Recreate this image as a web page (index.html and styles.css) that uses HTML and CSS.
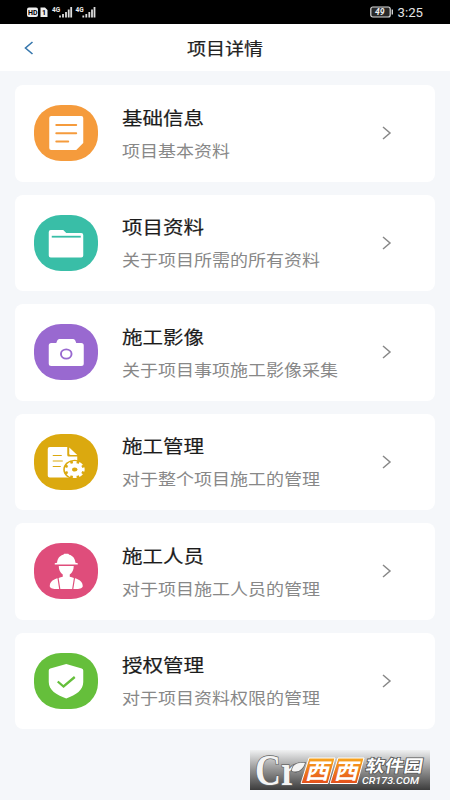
FILE: index.html
```html
<!DOCTYPE html>
<html lang="zh-CN">
<head>
<meta charset="utf-8">
<title>项目详情</title>
<link rel="stylesheet" href="styles.css">
</head>
<body>
<div class="status">
  <svg class="signals" width="70" height="14" viewBox="0 0 70 14">
    <rect x="0" y="2.500" width="11" height="9.500" rx="2" fill="#eee"/>
    <path d="M13.500 2.500h4.500l2.500 2.500V12h-7z" fill="#eee"/>
    <text x="1" y="9.900" class="hd">HD</text>
    <text x="15" y="9.900" class="hd">1</text>
    <text x="25" y="6.500" class="net">4G</text>
    <text x="48.500" y="6.500" class="net">4G</text>
    <path d="M33 12.500V10.500M36 12.500V9M39 12.500V7M41.700 12.500V4.500M44.200 12.500V2M56.300 12.500V10.500M59.300 12.500V9M62.300 12.500V7M65 12.500V4.500M67.500 12.500V2" stroke="#ddd" stroke-width="1.800"/>
  </svg>
  <div class="power">
    <svg width="24" height="12" viewBox="0 0 24 12">
      <rect x=".8" y="1" width="19.400" height="10" rx="2" fill="#292929" stroke="#ddd" stroke-width="1.200"/>
      <path d="M22.300 3.500v5" stroke="#ddd" stroke-width="1.300"/>
      <text x="5" y="9" class="level">49</text>
    </svg>
    <span class="clock">3:25</span>
  </div>
</div>
<header class="nav">
  <svg class="back" width="10" height="14" viewBox="0 0 10 14"><path d="M8.500 1L1.500 7l7 6" fill="none" stroke="#3677ad" stroke-width="1.600"/></svg>
  <h1><span class="wide">项目详情</span></h1>
</header>
<main class="list">
  <section class="card">
    <svg class="icon orange" viewBox="0 0 64 56">
      <path d="M17 11h30a2 2 0 0 1 2 2v25l-7 7H17a2 2 0 0 1-2-2V13a2 2 0 0 1 2-2z" fill="#fff"/>
      <path d="M22 20h20M22 28.300h20M22 36.500h12" stroke="#f59b3c" stroke-width="1.900" stroke-linecap="round"/>
    </svg>
    <div class="copy"><h2><span class="wide">基础信息</span></h2><p><span class="wide">项目基本资料</span></p></div>
    <svg class="arrow" viewBox="0 0 10 14"><path d="M1 1l7 6-7 6"/></svg>
  </section>
  <section class="card">
    <svg class="icon teal" viewBox="0 0 64 56">
      <path d="M16.500 15h12.500l3 3h15a2 2 0 0 1 2 2v20.500a2 2 0 0 1-2 2H16.500a2 2 0 0 1-2-2V17a2 2 0 0 1 2-2z" fill="#fff"/>
      <path d="M17.500 21.700h29" stroke="#39bea7" stroke-width="1.800"/>
    </svg>
    <div class="copy"><h2><span class="wide">项目资料</span></h2><p><span class="wide">关于项目所需的所有资料</span></p></div>
    <svg class="arrow" viewBox="0 0 10 14"><path d="M1 1l7 6-7 6"/></svg>
  </section>
  <section class="card">
    <svg class="icon purple" viewBox="0 0 64 56">
      <path d="M17 19h5l1-2.500q.6-1.500 2-1.500h14q1.400 0 2 1.500l1 2.500h5a2.500 2.500 0 0 1 2.500 2.500v18a2.500 2.500 0 0 1-2.500 2.500H17a2.500 2.500 0 0 1-2.500-2.500v-18A2.500 2.500 0 0 1 17 19z" fill="#fff"/>
      <ellipse cx="32" cy="30" rx="5.300" ry="4.600" fill="none" stroke="#9969d0" stroke-width="1.900"/>
    </svg>
    <div class="copy"><h2><span class="wide">施工影像</span></h2><p><span class="wide">关于项目事项施工影像采集</span></p></div>
    <svg class="arrow" viewBox="0 0 10 14"><path d="M1 1l7 6-7 6"/></svg>
  </section>
  <section class="card">
    <svg class="icon gold" viewBox="0 0 64 56">
      <path d="M15.500 13H33v8q0 1.500 1.500 1.500H43V43.500H15.500a2 2 0 0 1-2-2V15a2 2 0 0 1 2-2z" fill="#fff"/>
      <path d="M35 13.500l8 7.500h-6.500q-1.500 0-1.500-1.500z" fill="#fff"/>
      <path d="M18.500 21.500h9M18.500 27h10M18.500 32.500h8" stroke="#dba90f" stroke-width="1.200"/>
      <ellipse cx="40.500" cy="35.500" rx="11.500" ry="9.800" fill="#dba90f"/>
      <ellipse cx="40.500" cy="35.500" rx="7.800" ry="6.600" fill="#fff"/>
      <ellipse cx="40.500" cy="35.500" rx="8.400" ry="7" fill="none" stroke="#fff" stroke-width="3" pathLength="80" stroke-dasharray="6 4" stroke-dashoffset="3"/>
      <ellipse cx="40.500" cy="35.500" rx="2.700" ry="2.100" fill="#dba90f"/>
    </svg>
    <div class="copy"><h2><span class="wide">施工管理</span></h2><p><span class="wide">对于整个项目施工的管理</span></p></div>
    <svg class="arrow" viewBox="0 0 10 14"><path d="M1 1l7 6-7 6"/></svg>
  </section>
  <section class="card">
    <svg class="icon pink" viewBox="0 0 64 56">
      <path d="M20.500 21.500v-1.200l2.300-.6c.3-4.500 3-7.300 6.200-8l1-1h4l1 1c3.200.7 5.900 3.500 6.200 8l2.300.6v1.200z" fill="#fff"/>
      <path d="M24.500 23h15c0 4-1.500 6.600-4 8.500v2.300c5 1.500 13 2.500 13 9.200 0 1.800-2.500 3-6 3h-21c-3.500 0-6-1.200-6-3 0-6.700 8-7.700 13-9.200v-2.300c-2.500-1.900-4-4.500-4-8.500z" fill="#fff"/>
      <path d="M23.700 34.500l1.800 11.500M40.300 34.500L38.500 46" stroke="#df4d7b" stroke-width="1.200"/>
    </svg>
    <div class="copy"><h2><span class="wide">施工人员</span></h2><p><span class="wide">对于项目施工人员的管理</span></p></div>
    <svg class="arrow" viewBox="0 0 10 14"><path d="M1 1l7 6-7 6"/></svg>
  </section>
  <section class="card">
    <svg class="icon green" viewBox="0 0 64 56">
      <path d="M32 11l15.500 4.600q1.500.4 1.500 1.900V29c0 8-7 13-17 16.500C22 42 14.500 37 14.500 29V17.500q0-1.500 1.500-1.900z" fill="#fff"/>
      <path d="M23.500 28.500l5.800 5L40.500 24" fill="none" stroke="#65bf3b" stroke-width="2.300"/>
    </svg>
    <div class="copy"><h2><span class="wide">授权管理</span></h2><p><span class="wide">对于项目资料权限的管理</span></p></div>
    <svg class="arrow" viewBox="0 0 10 14"><path d="M1 1l7 6-7 6"/></svg>
  </section>
</main>
<svg class="watermark" width="180" height="40" viewBox="0 0 180 40">
  <defs>
    <linearGradient id="bar" x2="0" y2="1"><stop offset="0" stop-color="#f0f1f2"/><stop offset=".5" stop-color="#929292"/><stop offset="1" stop-color="#3c3c3c"/></linearGradient>
    <linearGradient id="tile" x2="0" y2="1"><stop offset="0" stop-color="#f8a51d"/><stop offset="1" stop-color="#e4501d"/></linearGradient>
  </defs>
  <rect width="180" height="40" fill="url(#bar)"/>
  <text class="mark outline" x="5" y="35" textLength="42" lengthAdjust="spacingAndGlyphs">Cr</text>
  <path class="outline" d="M42 21c0-6 5-9 13-8-2 6-6 10-13 8z"/>
  <g fill="url(#tile)" stroke="#fff" stroke-width="1"><path d="M59 8h26l-7 25.500H51z"/><path d="M88 8h26l-7 25.500H80z"/></g>
  <g class="tiles" transform="skewX(-14)">
    <text x="62" y="29.500" textLength="24" lengthAdjust="spacingAndGlyphs">西</text>
    <text x="91" y="29.500" textLength="24" lengthAdjust="spacingAndGlyphs">西</text>
  </g>
  <text class="brand" transform="skewX(-10)" x="119" y="22.500" textLength="57" lengthAdjust="spacingAndGlyphs">软件园</text>
  <text class="site" x="112" y="34" textLength="57" lengthAdjust="spacingAndGlyphs">CR173.COM</text>
</svg>
</body>
</html>
```
FILE: styles.css
```css
* { box-sizing: border-box; }
body {
  margin: 0;
  width: 450px;
  height: 800px;
  overflow: hidden;
  position: relative;
  background: #f5f7fa;
  font-family: "Noto Sans CJK SC", sans-serif;
}
h1, h2, p { margin: 0; font-weight: 400; white-space: nowrap; }
svg { display: block; flex: none; overflow: visible; }
.wide { display: inline-block; }
.status {
  height: 24px;
  padding: 0 27px;
  display: flex;
  justify-content: space-between;
  align-items: center;
  background: #000;
}
.hd { font: 700 7px Roboto, sans-serif; fill: #000; }
.net { font: 700 6.5px Roboto, sans-serif; fill: #eee; }
.level { font: italic 700 8.5px Roboto, sans-serif; fill: #eee; }
.power { display: flex; align-items: center; gap: 4px; }
.clock { font: 13.2px/22px Roboto, sans-serif; color: #e4e4e4; padding-top: 1px; }
.nav {
  height: 47px;
  display: grid;
  grid-template-columns: 50px 1fr 50px;
  align-items: center;
  background: #fff;
}
.back { margin-left: 24px; }
.nav h1 { font-size: 17px; line-height: 24px; color: #222; -webkit-text-stroke: .2px #222; text-align: center; }
.nav .wide { transform: scaleX(1.12); }
.list {
  padding: 14px 15px 0;
  display: flex;
  flex-direction: column;
  gap: 13px;
}
.card {
  height: 96.5px;
  display: flex;
  align-items: center;
  padding: 0 43px 0 18.5px;
  background: #fff;
  border-radius: 8px;
}
.icon { width: 64.5px; height: 56px; border-radius: 27px / 26px; }
.orange { background: #f59b3c; }
.teal { background: #39bea7; }
.purple { background: #9969d0; }
.gold { background: #dba90f; }
.pink { background: #df4d7b; }
.green { background: #65bf3b; }
.copy { flex: 1; margin-left: 24px; margin-top: -1px; }
.copy .wide { transform-origin: left; }
h2 { font-size: 18px; line-height: 34px; color: #1c1c1c; -webkit-text-stroke: .2px #1c1c1c; }
h2 .wide { transform: scaleX(1.14); }
p { font-size: 16px; line-height: 32px; color: #888; }
p .wide { transform: scaleX(1.125); }
.arrow { width: 10px; height: 14px; fill: none; stroke: #888; stroke-width: 1.5; }
.watermark { position: absolute; left: 250px; top: 750px; }
.mark { font: 700 45px "Liberation Serif", serif; }
.outline { fill: #f4f4f4; stroke: #666; stroke-width: 1.6; paint-order: stroke; }
.tiles { font: 700 22px "Noto Sans CJK SC", sans-serif; fill: #fff; }
.brand { font: 700 17px "Noto Sans CJK SC", sans-serif; fill: #fff; stroke: #555; stroke-width: 1.6; paint-order: stroke; }
.site { font: italic 500 9.5px Roboto, sans-serif; fill: #fff; }
```
